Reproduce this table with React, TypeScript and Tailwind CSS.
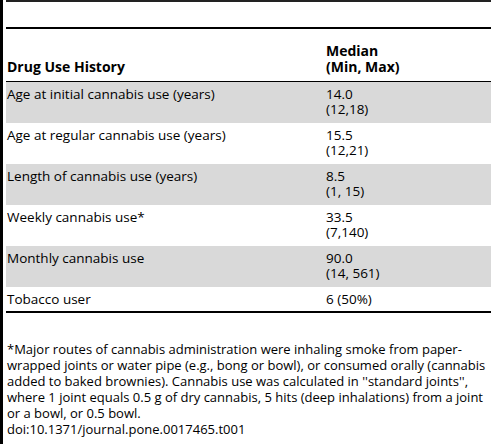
const rows = [
  { label: "Age at initial cannabis use (years)", value: "14.0", range: "(12,18)" },
  { label: "Age at regular cannabis use (years)", value: "15.5", range: "(12,21)" },
  { label: "Length of cannabis use (years)", value: "8.5", range: "(1, 15)" },
  { label: "Weekly cannabis use*", value: "33.5", range: "(7,140)" },
  { label: "Monthly cannabis use", value: "90.0", range: "(14, 561)" },
  { label: "Tobacco user", value: "6 (50%)", range: "" },
];

export default function App() {
  return (
    <div
      className="flex h-[444px] w-[491px] bg-white text-black"
      style={{ fontFamily: '"Open Sans", "Liberation Sans", sans-serif' }}
    >
      {/* left rule */}
      <div className="w-[3px] shrink-0 bg-black" />

      <div className="ml-[3px] flex-1 flex flex-col">
        <div className="h-[2px] bg-[#222]" />
        <div className="h-[25px]" />
        <div className="h-[2px] bg-black" />

        {/* header */}
        <div className="grid grid-cols-[320px_1fr] items-end h-[53px] pb-[6px] font-bold text-[14px] leading-[16px] border-b border-black">
          <div className="pl-[1px]">Drug Use History</div>
          <div>
            <div>Median</div>
            <div>(Min, Max)</div>
          </div>
        </div>

        {/* body */}
        {rows.map((row, i) => (
          <div
            key={row.label}
            className={`grid grid-cols-[320px_1fr] pt-[5px] text-[13.5px] leading-[15px] ${
              row.range ? "pb-[6px]" : "pb-[0px]"
            } ${i % 2 === 0 ? "bg-[#d9d9d9]" : "bg-white"}`}
          >
            <div className="pl-[1px]">{row.label}</div>
            <div>
              <div>{row.value}</div>
              {row.range && <div>{row.range}</div>}
            </div>
          </div>
        ))}
        <div className="h-[2px] bg-black mt-[4px]" />

        {/* footnote */}
        <div className="mt-[28px] pl-[1px] text-[13px] leading-[16px]">
          <p>
            *Major routes of cannabis administration were inhaling smoke from paper-wrapped joints or
            water pipe (e.g., bong or bowl), or consumed orally (cannabis added to baked brownies).
            Cannabis use was calculated in ''standard joints'', where 1 joint equals 0.5 g of dry
            cannabis, 5 hits (deep inhalations) from a joint or a bowl, or 0.5 bowl.
          </p>
          <p>doi:10.1371/journal.pone.0017465.t001</p>
        </div>
      </div>
    </div>
  );
}
